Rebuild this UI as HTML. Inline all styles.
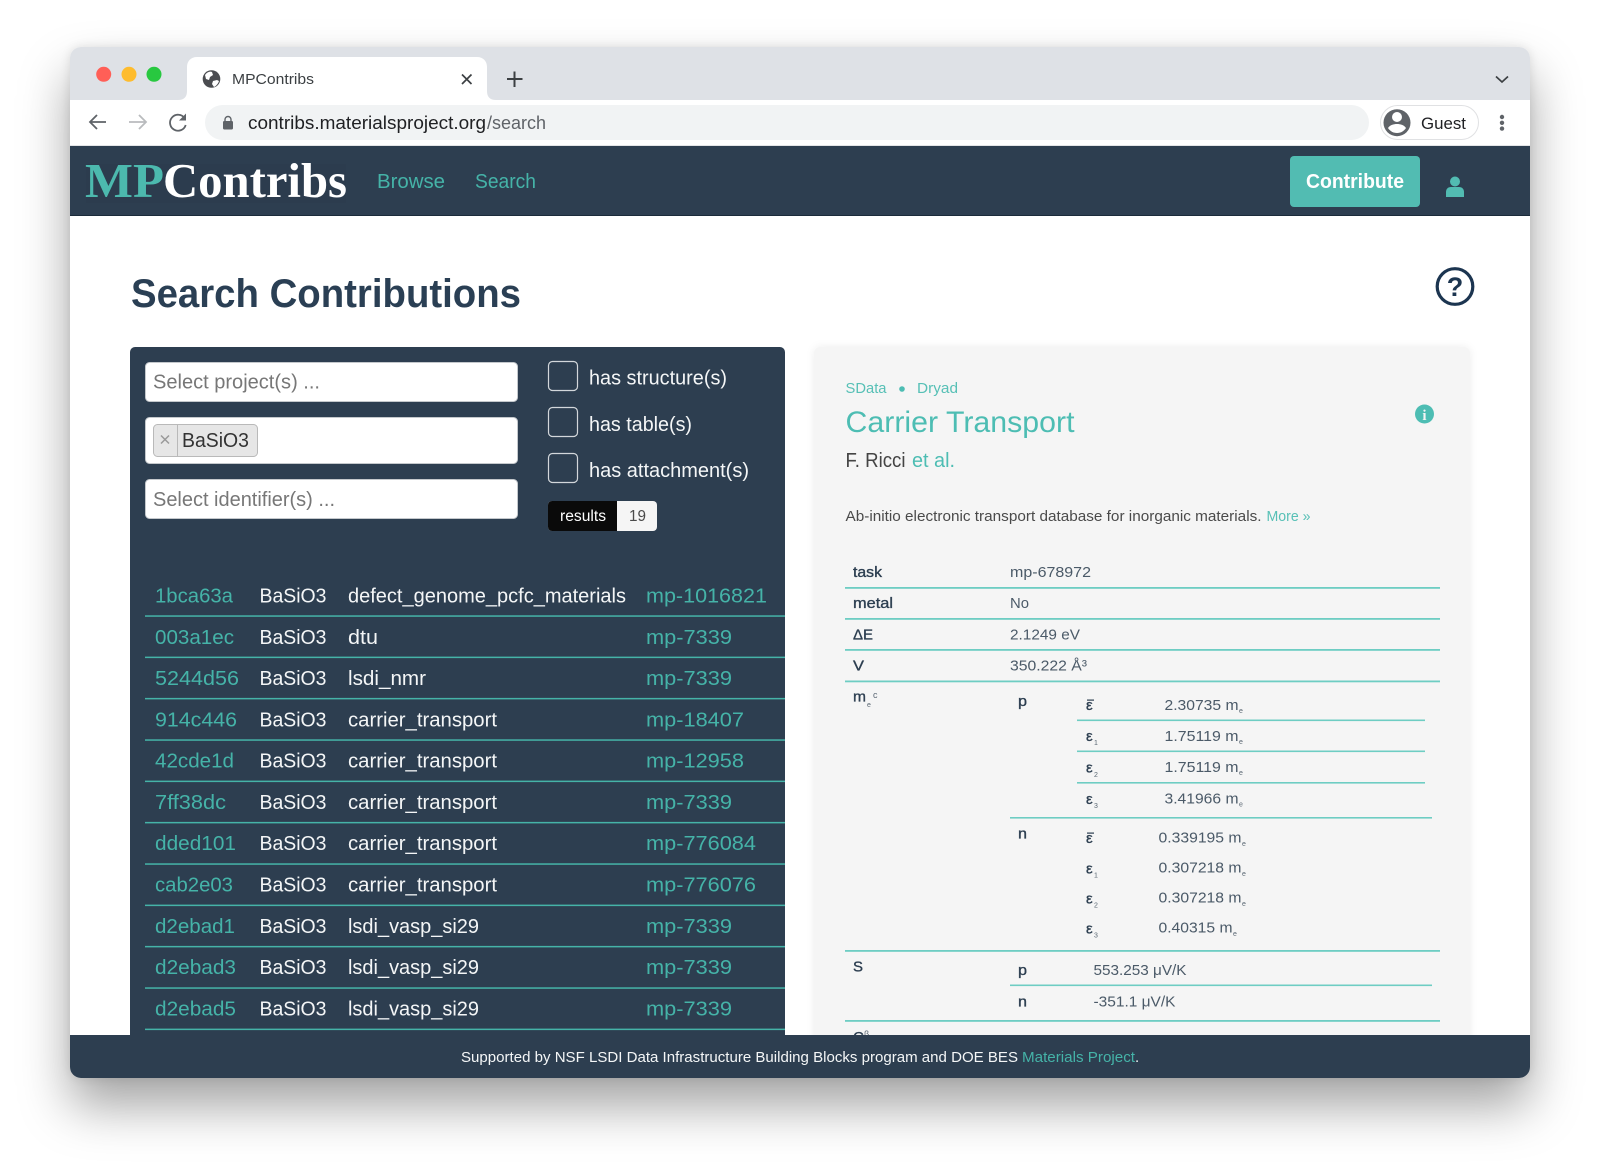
<!DOCTYPE html>
<html lang="en"><head><meta charset="utf-8"><title>MPContribs</title>
<style>
html,body{margin:0;padding:0;background:#fff;width:1600px;height:1170px;overflow:hidden}
#win{position:absolute;left:70px;top:47px;width:1460px;height:1031px;border-radius:11px;box-shadow:0 28px 50px rgba(0,0,0,.36),0 0 10px rgba(0,0,0,.1)}
svg{position:absolute;left:0;top:0;filter:blur(.3px)}
text{font-family:"Liberation Sans",sans-serif;white-space:pre}
.a{fill:#45b3a8}
.w{fill:#f4f6f7}
.d{fill:#4b5a68}
.b{fill:#2c3e50;stroke:#2c3e50;stroke-width:.35px}
.r text{font-size:20px}
.t text{font-size:15px}
.t text.s{font-size:7px;fill:#5a6773}
.t text.u{font-size:9px;fill:#5a6773}
</style></head><body>
<div id="win"></div>
<svg width="1600" height="1170" viewBox="0 0 1600 1170" xmlns="http://www.w3.org/2000/svg">
<defs><clipPath id="wc"><rect x="70" y="47" width="1460" height="1031" rx="11"/></clipPath>
<filter id="sh" x="-5%" y="-5%" width="110%" height="110%"><feDropShadow dx="0" dy="0" stdDeviation="4" flood-color="#000" flood-opacity=".07"/></filter></defs>
<g clip-path="url(#wc)">
<rect x="70" y="47" width="1460" height="1031" fill="#fff"/>
<rect x="70" y="47" width="1460" height="53" fill="#dee1e6"/>
<!-- traffic lights -->
<circle cx="103.7" cy="74.3" r="7.5" fill="#ff5f57"/><circle cx="129" cy="74.3" r="7.5" fill="#febc2e"/><circle cx="154" cy="74.3" r="7.5" fill="#28c840"/>
<!-- tab -->
<path d="M178 100c6 0 9-3 9-9V67c0-6 4-10 10-10h280c6 0 10 4 10 10v24c0 6 3 9 9 9z" fill="#fff"/>
<circle cx="211.5" cy="79" r="8.8" fill="#4a4c50"/>
<path d="M205 75c2-3 5-4 7-3l1 3-3 2-1 3-3-1zM213 81l4-1 2 1c-1 3-3 5-5 6l-2-3z" fill="#fff"/>
<text x="232" y="84" font-size="15" fill="#3c4043" textLength="82" lengthAdjust="spacingAndGlyphs">MPContribs</text>
<path d="M462 74.500l9.500 9.500M471.500 74.500l-9.500 9.500" stroke="#3c4043" stroke-width="1.700" fill="none"/>
<path d="M514.500 71.500v15.500M507 79h15.500" stroke="#3c4043" stroke-width="2" fill="none"/>
<path d="M1496 76.500l6 5.500 6-5.500" stroke="#3c4043" stroke-width="1.700" fill="none"/>
<!-- toolbar -->
<rect x="70" y="145.500" width="1460" height="1" fill="#c9cbcf"/>
<path d="M106 122H90M97 115l-7 7 7 7" stroke="#5f6368" stroke-width="1.800" fill="none"/>
<path d="M129 122h17M139 115l7 7-7 7" stroke="#b9bbbe" stroke-width="1.800" fill="none"/>
<path d="M184.500 118a8 8 0 1 0 1.200 7" stroke="#5f6368" stroke-width="1.800" fill="none"/><path d="M186 113.500v7h-7z" fill="#5f6368"/>
<rect x="205" y="105" width="1164" height="35" rx="17.500" fill="#f1f3f4"/>
<rect x="223" y="121" width="10" height="8.500" rx="1.200" fill="#5f6368"/><path d="M225 121v-1.500a3 3 0 0 1 6 0v1.500" stroke="#5f6368" stroke-width="1.400" fill="none"/>
<text x="248" y="129" font-size="18.500" fill="#202124" textLength="238" lengthAdjust="spacingAndGlyphs">contribs.materialsproject.org</text>
<text x="487" y="129" font-size="18.500" fill="#5f6368" textLength="59" lengthAdjust="spacingAndGlyphs">/search</text>
<rect x="1380.500" y="105.500" width="98" height="34" rx="17" fill="#fff" stroke="#e0e1e3"/>
<circle cx="1397" cy="122.700" r="13.500" fill="#5f6368"/><circle cx="1397" cy="117" r="5" fill="#fff"/><path d="M1388 128c2-3 5.500-4 9-4s7 1 9 4c-2 3-5 5-9 5s-7-2-9-5z" fill="#fff"/>
<text x="1421" y="129" font-size="16.500" fill="#202124" textLength="45" lengthAdjust="spacingAndGlyphs">Guest</text>
<circle cx="1502" cy="117" r="2.200" fill="#5f6368"/><circle cx="1502" cy="122.800" r="2.200" fill="#5f6368"/><circle cx="1502" cy="128.600" r="2.200" fill="#5f6368"/>
<!-- nav -->
<rect x="70" y="146" width="1460" height="70" fill="#2d3e50"/>
<rect x="70" y="215" width="1460" height="1" fill="#1b2b3a"/>
<rect x="86" y="164" width="260" height="39" fill="#2c3c4e"/>
<text x="85" y="197" style="font-family:'Liberation Serif',serif" font-weight="bold" font-size="49" fill="#4cb9ae" textLength="79" lengthAdjust="spacingAndGlyphs">MP</text>
<text x="163" y="197" style="font-family:'Liberation Serif',serif" font-weight="bold" font-size="49" fill="#fff" textLength="184" lengthAdjust="spacingAndGlyphs">Contribs</text>
<text x="377" y="188" font-size="20.500" class="a" textLength="68" lengthAdjust="spacingAndGlyphs">Browse</text>
<text x="475" y="188" font-size="20.500" class="a" textLength="61" lengthAdjust="spacingAndGlyphs">Search</text>
<rect x="1290" y="156" width="130" height="51" rx="4" fill="#52bcb2"/>
<text x="1306" y="188" font-size="20.500" font-weight="bold" fill="#fff" textLength="98" lengthAdjust="spacingAndGlyphs">Contribute</text>
<circle cx="1455" cy="181.500" r="5" fill="#52bcb2"/><path d="M1446 197v-5c0-3 2-5 5-5h8c3 0 5 2 5 5v5z" fill="#52bcb2"/>
<!-- heading -->
<text x="131" y="307" font-size="39.500" font-weight="bold" fill="#2a3f54" textLength="390" lengthAdjust="spacingAndGlyphs">Search Contributions</text>
<circle cx="1455" cy="286.500" r="17.800" fill="none" stroke="#1c3550" stroke-width="3.200"/>
<text x="1455" y="296" font-size="27" font-weight="bold" fill="#1c3550" text-anchor="middle">?</text>
<!-- left panel -->
<rect x="130" y="347" width="655" height="720" rx="5" fill="#2d3e50"/>
<g fill="#fff" stroke="#c4c8cc">
<rect x="145.500" y="362.500" width="372" height="39" rx="4"/>
<rect x="145.500" y="417.500" width="372" height="46" rx="4"/>
<rect x="145.500" y="479.500" width="372" height="39" rx="4"/>
</g>
<text x="153" y="388.500" font-size="20" fill="#777" textLength="167" lengthAdjust="spacingAndGlyphs">Select project(s) ...</text>
<text x="153" y="506" font-size="20" fill="#777" textLength="182" lengthAdjust="spacingAndGlyphs">Select identifier(s) ...</text>
<rect x="153.500" y="424.500" width="104" height="32" rx="4" fill="#e6e6e6" stroke="#b9b9b9"/>
<rect x="177" y="425" width="1" height="31" fill="#b9b9b9"/>
<path d="M161 435.500l8 8M169 435.500l-8 8" stroke="#999" stroke-width="1.500"/>
<text x="182" y="447" font-size="20" fill="#333" textLength="67" lengthAdjust="spacingAndGlyphs">BaSiO3</text>
<g fill="#2d3e50" stroke="#d3d7db" stroke-width="1.200">
<rect x="548.500" y="361.500" width="29" height="29" rx="4"/>
<rect x="548.500" y="407.500" width="29" height="29" rx="4"/>
<rect x="548.500" y="453.500" width="29" height="29" rx="4"/>
</g>
<text x="589" y="384.500" font-size="20" class="w" textLength="138" lengthAdjust="spacingAndGlyphs">has structure(s)</text>
<text x="589" y="431" font-size="20" class="w" textLength="103" lengthAdjust="spacingAndGlyphs">has table(s)</text>
<text x="589" y="477" font-size="20" class="w" textLength="160" lengthAdjust="spacingAndGlyphs">has attachment(s)</text>
<rect x="548" y="501" width="109" height="30" rx="4" fill="#f5f5f5"/>
<path d="M617 501h-65a4 4 0 0 0-4 4v22a4 4 0 0 0 4 4h65z" fill="#0a0a0a"/>
<text x="560" y="521" font-size="15.500" fill="#fff" textLength="46" lengthAdjust="spacingAndGlyphs">results</text>
<text x="629" y="521" font-size="15.500" fill="#4a4a4a" textLength="17" lengthAdjust="spacingAndGlyphs">19</text>
<!-- rows -->
<g fill="#45b3a8">
<rect x="145" y="615.300" width="640" height="1.500"/><rect x="145" y="656.600" width="640" height="1.500"/><rect x="145" y="697.900" width="640" height="1.500"/><rect x="145" y="739.300" width="640" height="1.500"/><rect x="145" y="780.600" width="640" height="1.500"/><rect x="145" y="821.900" width="640" height="1.500"/><rect x="145" y="863.300" width="640" height="1.500"/><rect x="145" y="904.600" width="640" height="1.500"/><rect x="145" y="945.900" width="640" height="1.500"/><rect x="145" y="987.300" width="640" height="1.500"/><rect x="145" y="1028.600" width="640" height="1.500"/>
</g>
<g class="r">
<text class="a" x="155" y="602.500" textLength="78" lengthAdjust="spacingAndGlyphs">1bca63a</text><text class="w" x="259.500" y="602.500" textLength="67" lengthAdjust="spacingAndGlyphs">BaSiO3</text><text class="w" x="348" y="602.500" textLength="278" lengthAdjust="spacingAndGlyphs">defect_genome_pcfc_materials</text><text class="a" x="646" y="602.500" textLength="121" lengthAdjust="spacingAndGlyphs">mp-1016821</text>
<text class="a" x="155" y="643.800" textLength="79" lengthAdjust="spacingAndGlyphs">003a1ec</text><text class="w" x="259.500" y="643.800" textLength="67" lengthAdjust="spacingAndGlyphs">BaSiO3</text><text class="w" x="348" y="643.800" textLength="30" lengthAdjust="spacingAndGlyphs">dtu</text><text class="a" x="646" y="643.800" textLength="86" lengthAdjust="spacingAndGlyphs">mp-7339</text>
<text class="a" x="155" y="685.100" textLength="84" lengthAdjust="spacingAndGlyphs">5244d56</text><text class="w" x="259.500" y="685.100" textLength="67" lengthAdjust="spacingAndGlyphs">BaSiO3</text><text class="w" x="348" y="685.100" textLength="78" lengthAdjust="spacingAndGlyphs">lsdi_nmr</text><text class="a" x="646" y="685.100" textLength="86" lengthAdjust="spacingAndGlyphs">mp-7339</text>
<text class="a" x="155" y="726.300" textLength="82" lengthAdjust="spacingAndGlyphs">914c446</text><text class="w" x="259.500" y="726.300" textLength="67" lengthAdjust="spacingAndGlyphs">BaSiO3</text><text class="w" x="348" y="726.300" textLength="149" lengthAdjust="spacingAndGlyphs">carrier_transport</text><text class="a" x="646" y="726.300" textLength="98" lengthAdjust="spacingAndGlyphs">mp-18407</text>
<text class="a" x="155" y="767.500" textLength="79" lengthAdjust="spacingAndGlyphs">42cde1d</text><text class="w" x="259.500" y="767.500" textLength="67" lengthAdjust="spacingAndGlyphs">BaSiO3</text><text class="w" x="348" y="767.500" textLength="149" lengthAdjust="spacingAndGlyphs">carrier_transport</text><text class="a" x="646" y="767.500" textLength="98" lengthAdjust="spacingAndGlyphs">mp-12958</text>
<text class="a" x="155" y="808.900" textLength="71" lengthAdjust="spacingAndGlyphs">7ff38dc</text><text class="w" x="259.500" y="808.900" textLength="67" lengthAdjust="spacingAndGlyphs">BaSiO3</text><text class="w" x="348" y="808.900" textLength="149" lengthAdjust="spacingAndGlyphs">carrier_transport</text><text class="a" x="646" y="808.900" textLength="86" lengthAdjust="spacingAndGlyphs">mp-7339</text>
<text class="a" x="155" y="850.200" textLength="81" lengthAdjust="spacingAndGlyphs">dded101</text><text class="w" x="259.500" y="850.200" textLength="67" lengthAdjust="spacingAndGlyphs">BaSiO3</text><text class="w" x="348" y="850.200" textLength="149" lengthAdjust="spacingAndGlyphs">carrier_transport</text><text class="a" x="646" y="850.200" textLength="110" lengthAdjust="spacingAndGlyphs">mp-776084</text>
<text class="a" x="155" y="891.500" textLength="78" lengthAdjust="spacingAndGlyphs">cab2e03</text><text class="w" x="259.500" y="891.500" textLength="67" lengthAdjust="spacingAndGlyphs">BaSiO3</text><text class="w" x="348" y="891.500" textLength="149" lengthAdjust="spacingAndGlyphs">carrier_transport</text><text class="a" x="646" y="891.500" textLength="110" lengthAdjust="spacingAndGlyphs">mp-776076</text>
<text class="a" x="155" y="932.900" textLength="80" lengthAdjust="spacingAndGlyphs">d2ebad1</text><text class="w" x="259.500" y="932.900" textLength="67" lengthAdjust="spacingAndGlyphs">BaSiO3</text><text class="w" x="348" y="932.900" textLength="131" lengthAdjust="spacingAndGlyphs">lsdi_vasp_si29</text><text class="a" x="646" y="932.900" textLength="86" lengthAdjust="spacingAndGlyphs">mp-7339</text>
<text class="a" x="155" y="974.200" textLength="81" lengthAdjust="spacingAndGlyphs">d2ebad3</text><text class="w" x="259.500" y="974.200" textLength="67" lengthAdjust="spacingAndGlyphs">BaSiO3</text><text class="w" x="348" y="974.200" textLength="131" lengthAdjust="spacingAndGlyphs">lsdi_vasp_si29</text><text class="a" x="646" y="974.200" textLength="86" lengthAdjust="spacingAndGlyphs">mp-7339</text>
<text class="a" x="155" y="1015.400" textLength="81" lengthAdjust="spacingAndGlyphs">d2ebad5</text><text class="w" x="259.500" y="1015.400" textLength="67" lengthAdjust="spacingAndGlyphs">BaSiO3</text><text class="w" x="348" y="1015.400" textLength="131" lengthAdjust="spacingAndGlyphs">lsdi_vasp_si29</text><text class="a" x="646" y="1015.400" textLength="86" lengthAdjust="spacingAndGlyphs">mp-7339</text>
</g>
<!-- right panel -->
<rect x="814" y="347" width="656" height="720" rx="6" fill="#f5f5f5" filter="url(#sh)"/>
<text x="845.500" y="393" font-size="15" fill="#57c0b6" textLength="41" lengthAdjust="spacingAndGlyphs">SData</text>
<circle cx="902" cy="389" r="2.800" fill="#4dbdb3"/>
<text x="917" y="393" font-size="15" fill="#57c0b6" textLength="41" lengthAdjust="spacingAndGlyphs">Dryad</text>
<text x="845.500" y="432" font-size="30" fill="#4dbdb3" textLength="229" lengthAdjust="spacingAndGlyphs">Carrier Transport</text>
<text x="845.500" y="467" font-size="20" fill="#444" textLength="60" lengthAdjust="spacingAndGlyphs">F. Ricci</text>
<text x="912" y="467" font-size="20" fill="#4dbdb3" textLength="43" lengthAdjust="spacingAndGlyphs">et al.</text>
<circle cx="1424.500" cy="414" r="9.500" fill="#4dbdb3"/>
<text x="1424.500" y="420" font-size="15" font-weight="bold" fill="#f5f5f5" text-anchor="middle" style="font-family:'Liberation Serif',serif">i</text>
<text x="845.500" y="521" font-size="15" fill="#4a4a4a" textLength="416" lengthAdjust="spacingAndGlyphs">Ab-initio electronic transport database for inorganic materials.</text>
<text x="1266.500" y="521" font-size="15" fill="#57c0b6" textLength="44" lengthAdjust="spacingAndGlyphs">More »</text>
<g fill="#6ecdc3">
<rect x="845" y="587" width="595" height="1.800"/><rect x="845" y="618" width="595" height="1.800"/><rect x="845" y="649" width="595" height="1.800"/><rect x="845" y="680.500" width="595" height="1.800"/>
<rect x="1077" y="719.500" width="348" height="1.600"/><rect x="1077" y="750.500" width="348" height="1.600"/><rect x="1077" y="782" width="348" height="1.600"/>
<rect x="1010" y="817" width="422" height="1.600"/>
<rect x="845" y="950" width="595" height="1.800"/>
<rect x="1010" y="984.500" width="422" height="1.600"/>
<rect x="845" y="1020" width="595" height="1.800"/>
</g>
<g fill="#2c3e50"><rect x="1087" y="699.500" width="7" height="1.200"/><rect x="1087" y="832.500" width="7" height="1.200"/></g>
<g class="t">
<text class="b" x="853" y="577" textLength="29" lengthAdjust="spacingAndGlyphs">task</text><text class="d" x="1010" y="577" textLength="81" lengthAdjust="spacingAndGlyphs">mp-678972</text>
<text class="b" x="853" y="608" textLength="40" lengthAdjust="spacingAndGlyphs">metal</text><text class="d" x="1010" y="608" textLength="19" lengthAdjust="spacingAndGlyphs">No</text>
<text class="b" x="853" y="639.500" textLength="20" lengthAdjust="spacingAndGlyphs">ΔE</text><text class="d" x="1010" y="639.500" textLength="70" lengthAdjust="spacingAndGlyphs">2.1249 eV</text>
<text class="b" x="853" y="670.500" textLength="11" lengthAdjust="spacingAndGlyphs">V</text><text class="d" x="1010" y="670.500" textLength="77" lengthAdjust="spacingAndGlyphs">350.222 Å³</text>
<text class="b" x="853" y="701.500" textLength="13" lengthAdjust="spacingAndGlyphs">m</text><text class="s" x="867" y="707">e</text><text class="u" x="873" y="698">c</text>
<text class="b" x="1018" y="706" textLength="9" lengthAdjust="spacingAndGlyphs">p</text>
<text class="b" x="1086" y="710">ε</text><text class="d" x="1164.500" y="710" textLength="74" lengthAdjust="spacingAndGlyphs">2.30735 m</text><text class="s" x="1239" y="713">e</text>
<text class="b" x="1086" y="741">ε</text><text class="s" x="1094" y="745">1</text><text class="d" x="1164.500" y="741" textLength="74" lengthAdjust="spacingAndGlyphs">1.75119 m</text><text class="s" x="1239" y="744">e</text>
<text class="b" x="1086" y="772.500">ε</text><text class="s" x="1094" y="777">2</text><text class="d" x="1164.500" y="772" textLength="74" lengthAdjust="spacingAndGlyphs">1.75119 m</text><text class="s" x="1239" y="775">e</text>
<text class="b" x="1086" y="804">ε</text><text class="s" x="1094" y="808">3</text><text class="d" x="1164.500" y="803.500" textLength="74" lengthAdjust="spacingAndGlyphs">3.41966 m</text><text class="s" x="1239" y="806.500">e</text>
<text class="b" x="1018" y="838.500" textLength="9" lengthAdjust="spacingAndGlyphs">n</text>
<text class="b" x="1086" y="843">ε</text><text class="d" x="1158.500" y="842.500" textLength="83" lengthAdjust="spacingAndGlyphs">0.339195 m</text><text class="s" x="1242" y="846">e</text>
<text class="b" x="1086" y="873.500">ε</text><text class="s" x="1094" y="877.500">1</text><text class="d" x="1158.500" y="872.500" textLength="83" lengthAdjust="spacingAndGlyphs">0.307218 m</text><text class="s" x="1242" y="876">e</text>
<text class="b" x="1086" y="903.500">ε</text><text class="s" x="1094" y="907.500">2</text><text class="d" x="1158.500" y="902.500" textLength="83" lengthAdjust="spacingAndGlyphs">0.307218 m</text><text class="s" x="1242" y="906">e</text>
<text class="b" x="1086" y="933.500">ε</text><text class="s" x="1094" y="937.500">3</text><text class="d" x="1158.500" y="932.500" textLength="74" lengthAdjust="spacingAndGlyphs">0.40315 m</text><text class="s" x="1233" y="936">e</text>
<text class="b" x="853" y="971.500" textLength="10" lengthAdjust="spacingAndGlyphs">S</text>
<text class="b" x="1018" y="975" textLength="9" lengthAdjust="spacingAndGlyphs">p</text><text class="d" x="1093.500" y="975" textLength="93" lengthAdjust="spacingAndGlyphs">553.253 μV/K</text>
<text class="b" x="1018" y="1006.500" textLength="9" lengthAdjust="spacingAndGlyphs">n</text><text class="d" x="1093.500" y="1006.500" textLength="82" lengthAdjust="spacingAndGlyphs">-351.1 μV/K</text>
<text class="b" x="853" y="1042">C</text><text class="u" x="864" y="1037">β</text>
</g>
<!-- footer -->
<rect x="70" y="1035" width="1460" height="43" fill="#2d3e50"/>
<text x="461" y="1062" font-size="15" class="w" textLength="557" lengthAdjust="spacingAndGlyphs">Supported by NSF LSDI Data Infrastructure Building Blocks program and DOE BES</text>
<text x="1022" y="1062" font-size="15" class="a" textLength="113" lengthAdjust="spacingAndGlyphs">Materials Project</text>
<text x="1135" y="1062" font-size="15" class="w">.</text>
</g>
</svg>
</body></html>
